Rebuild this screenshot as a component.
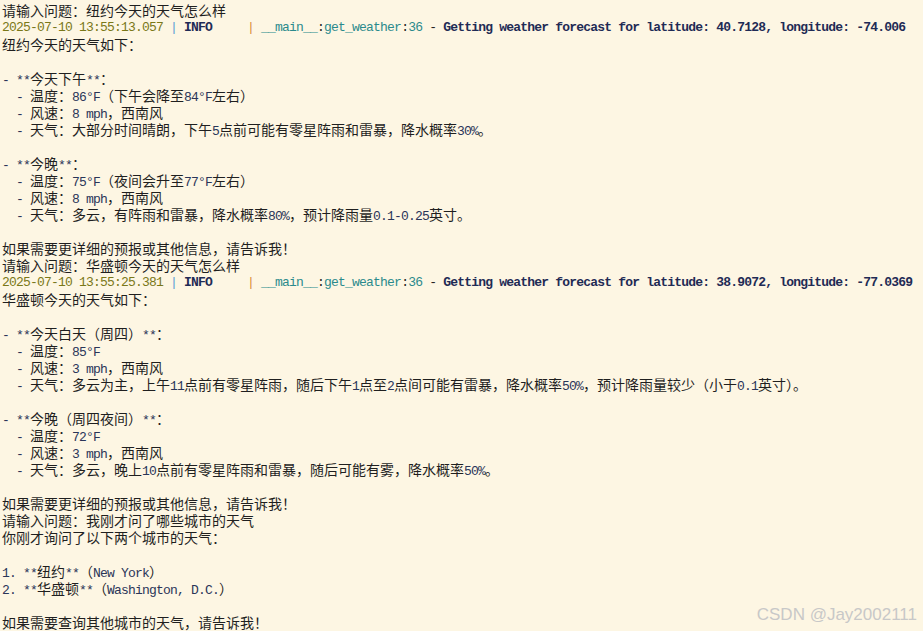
import React from "react";

const CJK = /([\u2e80-\u9fff\u3000-\u303f\uff00-\uffef]+)/;

// splits a string into latin (mono, 7px cells) and CJK (14px cells) runs
function Mixed({ text, latin = "text-[#2a3558]" }: { text: string; latin?: string }) {
  const parts = text.split(CJK).filter((p) => p.length > 0);
  return (
    <>
      {parts.map((p, i) =>
        CJK.test(p) ? (
          <span key={i} className="font-['Noto_Sans_CJK_SC',sans-serif] text-[14px] tracking-normal text-[#1f1f1f]">
            {p}
          </span>
        ) : (
          <span key={i} className={latin}>
            {p}
          </span>
        )
      )}
    </>
  );
}

function Line({ text }: { text?: string }) {
  return (
    <div className="h-[17px] leading-[17px] whitespace-pre">
      {text ? <Mixed text={text} /> : null}
    </div>
  );
}

function LogLine({ time, lat, lng }: { time: string; lat: string; lng: string }) {
  return (
    <div className="h-[17px] leading-[17px] whitespace-pre text-[#1f1f1f]">
      <span className="text-[#7a7818]">{time}</span>
      <span className="text-[#5b9bd5]"> | </span>
      <span className="font-bold text-[#1f2b55]">{"INFO    "}</span>
      <span className="text-[#d88a3a]"> | </span>
      <span className="text-[#2a8a8c]">__main__</span>
      <span>:</span>
      <span className="text-[#2a8a8c]">get_weather</span>
      <span>:</span>
      <span className="text-[#2a8a8c]">36</span>
      <span> - </span>
      <span className="font-bold text-[#1f2b55]">
        {`Getting weather forecast for latitude: ${lat}, longitude: ${lng}`}
      </span>
    </div>
  );
}

export default function App() {
  return (
    <div className="relative w-[923px] h-[631px] overflow-hidden bg-[#fdf6e3] font-['Liberation_Mono',monospace] text-[13px] tracking-[-0.8px]">
      <div className="pt-[2px] pl-[2px]">
        <Line text="请输入问题：纽约今天的天气怎么样" />
        <LogLine time="2025-07-10 13:55:13.057" lat="40.7128" lng="-74.006" />
        <Line text="纽约今天的天气如下：" />
        <Line />
        <Line text="- **今天下午**：" />
        <Line text="  - 温度：86°F（下午会降至84°F左右）" />
        <Line text="  - 风速：8 mph，西南风" />
        <Line text="  - 天气：大部分时间晴朗，下午5点前可能有零星阵雨和雷暴，降水概率30%。" />
        <Line />
        <Line text="- **今晚**：" />
        <Line text="  - 温度：75°F（夜间会升至77°F左右）" />
        <Line text="  - 风速：8 mph，西南风" />
        <Line text="  - 天气：多云，有阵雨和雷暴，降水概率80%，预计降雨量0.1-0.25英寸。" />
        <Line />
        <Line text="如果需要更详细的预报或其他信息，请告诉我！" />
        <Line text="请输入问题：华盛顿今天的天气怎么样" />
        <LogLine time="2025-07-10 13:55:25.381" lat="38.9072" lng="-77.0369" />
        <Line text="华盛顿今天的天气如下：" />
        <Line />
        <Line text="- **今天白天（周四）**：" />
        <Line text="  - 温度：85°F" />
        <Line text="  - 风速：3 mph，西南风" />
        <Line text="  - 天气：多云为主，上午11点前有零星阵雨，随后下午1点至2点间可能有雷暴，降水概率50%，预计降雨量较少（小于0.1英寸）。" />
        <Line />
        <Line text="- **今晚（周四夜间）**：" />
        <Line text="  - 温度：72°F" />
        <Line text="  - 风速：3 mph，西南风" />
        <Line text="  - 天气：多云，晚上10点前有零星阵雨和雷暴，随后可能有雾，降水概率50%。" />
        <Line />
        <Line text="如果需要更详细的预报或其他信息，请告诉我！" />
        <Line text="请输入问题：我刚才问了哪些城市的天气" />
        <Line text="你刚才询问了以下两个城市的天气：" />
        <Line />
        <Line text="1. **纽约**（New York）" />
        <Line text="2. **华盛顿**（Washington, D.C.）" />
        <Line />
        <Line text="如果需要查询其他城市的天气，请告诉我！" />
      </div>

      {/* watermark */}
      <div className="absolute right-[6px] bottom-[6px] font-['Liberation_Sans',sans-serif] text-[17px] leading-[20px] tracking-normal text-[#c8c8c8]">
        CSDN @Jay2002111
      </div>
    </div>
  );
}
